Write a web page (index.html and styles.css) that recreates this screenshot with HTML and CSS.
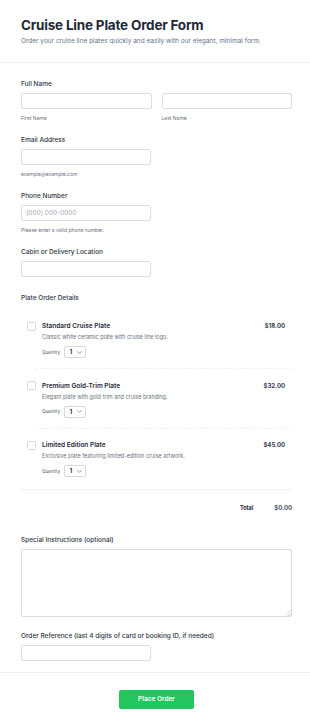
FILE: index.html
```html
<!DOCTYPE html>
<html lang="en">
<head>
<meta charset="utf-8">
<title>Cruise Line Plate Order Form</title>
<link rel="stylesheet" href="styles.css">
</head>
<body>
<header class="hdr">
  <h1 class="title">Cruise Line Plate Order Form</h1>
  <p class="subtitle">Order your cruise line plates quickly and easily with our elegant, minimal form.</p>
</header>

<form class="form">
  <div class="field">
    <label class="label">Full Name</label>
    <div class="row">
      <div>
        <input class="input" type="text">
        <div class="sub">First Name</div>
      </div>
      <div>
        <input class="input" type="text">
        <div class="sub">Last Name</div>
      </div>
    </div>
  </div>

  <div class="field">
    <label class="label">Email Address</label>
    <input class="input half" type="email">
    <div class="sub">example@example.com</div>
  </div>

  <div class="field">
    <label class="label">Phone Number</label>
    <input class="input half" type="tel" placeholder="(000) 000-0000">
    <div class="sub">Please enter a valid phone number.</div>
  </div>

  <div class="field field-plain">
    <label class="label">Cabin or Delivery Location</label>
    <input class="input half" type="text">
  </div>

  <div class="field">
    <label class="label">Plate Order Details</label>
    <div class="items">
      <div class="item">
        <span class="check"></span>
        <div class="info">
          <div class="name">Standard Cruise Plate</div>
          <div class="desc">Classic white ceramic plate with cruise line logo.</div>
          <div class="qty">
            <span class="qty-label">Quantity</span>
            <span class="select">1<svg class="chev" viewBox="0 0 8 5" width="5" height="3"><path d="M1 1l3 3 3-3" fill="none" stroke="#6b7280" stroke-width="1.2" stroke-linecap="round" stroke-linejoin="round"/></svg></span>
          </div>
        </div>
        <div class="price">$18.00</div>
      </div>
      <div class="item">
        <span class="check"></span>
        <div class="info">
          <div class="name">Premium Gold-Trim Plate</div>
          <div class="desc">Elegant plate with gold trim and cruise branding.</div>
          <div class="qty">
            <span class="qty-label">Quantity</span>
            <span class="select">1<svg class="chev" viewBox="0 0 8 5" width="5" height="3"><path d="M1 1l3 3 3-3" fill="none" stroke="#6b7280" stroke-width="1.2" stroke-linecap="round" stroke-linejoin="round"/></svg></span>
          </div>
        </div>
        <div class="price">$32.00</div>
      </div>
      <div class="item">
        <span class="check"></span>
        <div class="info">
          <div class="name">Limited Edition Plate</div>
          <div class="desc">Exclusive plate featuring limited-edition cruise artwork.</div>
          <div class="qty">
            <span class="qty-label">Quantity</span>
            <span class="select">1<svg class="chev" viewBox="0 0 8 5" width="5" height="3"><path d="M1 1l3 3 3-3" fill="none" stroke="#6b7280" stroke-width="1.2" stroke-linecap="round" stroke-linejoin="round"/></svg></span>
          </div>
        </div>
        <div class="price">$45.00</div>
      </div>
    </div>
    <div class="total">
      <span class="total-label">Total</span>
      <span class="total-value">$0.00</span>
    </div>
  </div>

  <div class="field field-text">
    <label class="label">Special Instructions (optional)</label>
    <textarea class="textarea"></textarea>
  </div>

  <div class="field field-last">
    <label class="label">Order Reference (last 4 digits of card or booking ID, if needed)</label>
    <input class="input half" type="text">
  </div>
</form>

<footer class="ftr">
  <button class="btn" type="button">Place Order</button>
</footer>
</body>
</html>
```
FILE: styles.css
```css
* { box-sizing: border-box; }

html, body {
  margin: 0;
  background: #ffffff;
  font-family: Inter, "Noto Sans", "Liberation Sans", sans-serif;
  color: #1f2937;
}

.hdr {
  padding: 16px 18px 16px 21px;
  border-bottom: 1px solid #eceef1;
}

.title {
  margin: 0;
  font-size: 13.5px;
  line-height: 18px;
  font-weight: 700;
  letter-spacing: -0.015em;
  color: #1f2937;
}

.subtitle {
  margin: 2px 0 0;
  font-size: 6.5px;
  line-height: 10px;
  color: #64748b;
}

.form {
  padding: 16px 18px 11px 21px;
}

.field { margin-bottom: 13px; }
.field-plain { margin-bottom: 16px; }
.field-text { margin-bottom: 14px; }
.field-last { margin-bottom: 0; }

.label {
  display: block;
  font-size: 6.5px;
  line-height: 10px;
  font-weight: 500;
  color: #2f3644;
}

.row {
  display: grid;
  grid-template-columns: 1fr 1fr;
  column-gap: 10px;
}

.input {
  display: block;
  width: 100%;
  height: 16px;
  margin: 4px 0 0;
  padding: 0 4px;
  border: 1px solid #dcdee4;
  border-radius: 2px;
  background: #fff;
  font: inherit;
  font-size: 6.5px;
  color: #1f2937;
  outline: none;
}
.input.half { width: 130px; }
.input::placeholder { color: #a3a9b4; }

.sub {
  margin-top: 5px;
  font-size: 5px;
  line-height: 8px;
  color: #6b7280;
}

.items {
  margin-top: 6.5px;
  border-bottom: 1px solid #f0f1f3;
}

.item {
  display: grid;
  grid-template-columns: 9px 1fr auto;
  column-gap: 6px;
  padding: 11.5px 0 0 6px;
}
.item:last-child { padding-bottom: 12px; }
.item:not(:last-child)::after {
  content: "";
  grid-column: 1 / -1;
  margin: 10px 0 0 8px;
  border-bottom: 1px dashed #f0f1f3;
}

.check {
  width: 9px;
  height: 9px;
  margin-top: 0.5px;
  border: 1px solid #d6d9de;
  border-radius: 1.5px;
  background: #fff;
}

.name {
  font-size: 6.5px;
  line-height: 10px;
  font-weight: 600;
  color: #1f2937;
}

.desc {
  margin-top: 2px;
  font-size: 5.5px;
  line-height: 8px;
  color: #6b7280;
}

.qty {
  display: flex;
  align-items: center;
  gap: 4px;
  margin-top: 5px;
}

.qty-label {
  font-size: 4.5px;
  color: #4b5563;
}

.select {
  display: inline-flex;
  align-items: center;
  gap: 5px;
  width: 22px;
  height: 12px;
  padding: 0 0 0 4.5px;
  border: 1px solid #d6d9de;
  border-radius: 2px;
  font-size: 6.5px;
  font-weight: 600;
  color: #1f2937;
}
.chev { display: block; }

.price {
  margin-right: 7px;
  font-size: 6px;
  line-height: 10px;
  font-weight: 700;
  color: #334155;
}

.total {
  display: flex;
  justify-content: flex-end;
  align-items: center;
  gap: 21px;
  margin: 12.5px 0 22.5px;
  line-height: 10px;
}
.total-label {
  font-size: 5.5px;
  font-weight: 700;
  color: #1f2937;
}
.total-value {
  font-size: 6px;
  font-weight: 700;
  color: #475569;
}

.textarea {
  display: block;
  width: 100%;
  height: 68px;
  margin-top: 4px;
  border: 1px solid #dcdee4;
  border-radius: 2px;
  resize: vertical;
  font: inherit;
  font-size: 6.5px;
  outline: none;
}
.textarea::-webkit-resizer {
  background: linear-gradient(135deg, transparent 0 78%, #d9dbdf 78% 83%, transparent 83% 89%, #d9dbdf 89% 94%, transparent 94%);
}

.ftr {
  border-top: 1px solid #eceef1;
  padding: 12px 18px 16px 21px;
  text-align: center;
}

.btn {
  width: 75px;
  height: 19px;
  border: 0;
  border-radius: 2px;
  background: #22c55e;
  color: #ffffff;
  font-family: inherit;
  font-size: 6.5px;
  font-weight: 600;
}
```
